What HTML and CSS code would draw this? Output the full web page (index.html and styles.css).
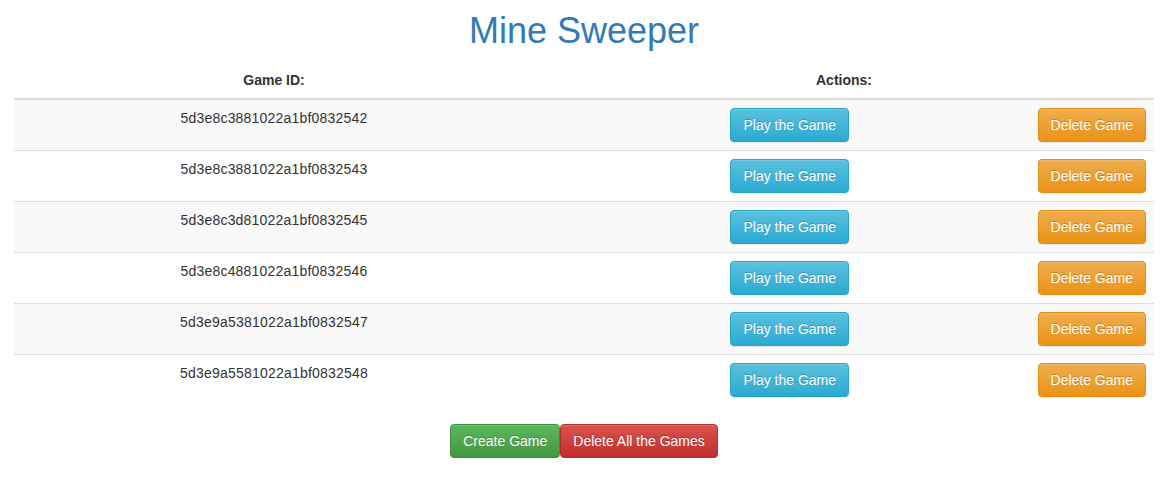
FILE: index.html
```html
<!DOCTYPE html>
<html lang="en">
<head>
<meta charset="utf-8">
<title>Mine Sweeper</title>
<link rel="stylesheet" href="styles.css">
</head>
<body>
<div class="container">
  <h1 class="title">Mine Sweeper</h1>
  <table class="games">
    <thead>
      <tr>
        <th class="col-id">Game ID:</th>
        <th class="col-actions">Actions:</th>
      </tr>
    </thead>
    <tbody>
      <tr>
        <td class="game-id">5d3e8c3881022a1bf0832542</td>
        <td><div class="actions"><div class="play-cell"><button class="btn btn-info">Play the Game</button></div><button class="btn btn-warning">Delete Game</button></div></td>
      </tr>
      <tr>
        <td class="game-id">5d3e8c3881022a1bf0832543</td>
        <td><div class="actions"><div class="play-cell"><button class="btn btn-info">Play the Game</button></div><button class="btn btn-warning">Delete Game</button></div></td>
      </tr>
      <tr>
        <td class="game-id">5d3e8c3d81022a1bf0832545</td>
        <td><div class="actions"><div class="play-cell"><button class="btn btn-info">Play the Game</button></div><button class="btn btn-warning">Delete Game</button></div></td>
      </tr>
      <tr>
        <td class="game-id">5d3e8c4881022a1bf0832546</td>
        <td><div class="actions"><div class="play-cell"><button class="btn btn-info">Play the Game</button></div><button class="btn btn-warning">Delete Game</button></div></td>
      </tr>
      <tr>
        <td class="game-id">5d3e9a5381022a1bf0832547</td>
        <td><div class="actions"><div class="play-cell"><button class="btn btn-info">Play the Game</button></div><button class="btn btn-warning">Delete Game</button></div></td>
      </tr>
      <tr>
        <td class="game-id">5d3e9a5581022a1bf0832548</td>
        <td><div class="actions"><div class="play-cell"><button class="btn btn-info">Play the Game</button></div><button class="btn btn-warning">Delete Game</button></div></td>
      </tr>
    </tbody>
  </table>
  <div class="footer-actions"><button class="btn btn-success">Create Game</button><button class="btn btn-danger">Delete All the Games</button></div>
</div>
</body>
</html>
```
FILE: styles.css
```css
* { box-sizing: border-box; }
html, body { margin: 0; padding: 0; }
body {
  font-family: "Liberation Sans", Arial, Helvetica, sans-serif;
  font-size: 14px;
  line-height: 20px;
  color: #333;
  background: #fff;
}
.container { padding: 0 14px; }
.title {
  margin: 11px 0 11px;
  font-size: 36px;
  line-height: 40px;
  font-weight: 500;
  color: #337ab7;
  text-align: center;
}
.games {
  width: 100%;
  border-collapse: collapse;
  border-spacing: 0;
  table-layout: fixed;
  margin-bottom: 19px;
}
.games th, .games td {
  padding: 8px;
  line-height: 20px;
  text-align: center;
}
.games th {
  vertical-align: bottom;
  font-weight: bold;
  border-bottom: 2px solid #ddd;
}
.games .col-id { width: 520px; }
.games td {
  vertical-align: top;
  border-top: 1px solid #ddd;
}
.games .game-id { letter-spacing: 0.2px; }
.games tbody tr:nth-child(odd) td { background: #f9f9f9; }
.actions { display: flex; align-items: flex-start; }
.play-cell { flex: 1; display: flex; justify-content: center; }
.btn {
  display: inline-block;
  padding: 6px 12px;
  font-family: inherit;
  font-size: 14px;
  line-height: 20px;
  color: #fff;
  border: 1px solid transparent;
  border-radius: 4px;
  cursor: pointer;
  text-shadow: 0 -1px 0 rgba(0,0,0,.2);
  box-shadow: inset 0 1px 0 rgba(255,255,255,.15), 0 1px 1px rgba(0,0,0,.075);
  margin: 0;
}
.btn-info { background-image: linear-gradient(to bottom, #5bc0de 0, #2aabd2 100%); border-color: #28a4c9; }
.btn-warning { background-image: linear-gradient(to bottom, #f0ad4e 0, #eb9316 100%); border-color: #e38d13; }
.btn-success { background-image: linear-gradient(to bottom, #5cb85c 0, #419641 100%); border-color: #3e8f3e; }
.btn-danger { background-image: linear-gradient(to bottom, #d9534f 0, #c12e2a 100%); border-color: #b92c28; }
.footer-actions { display: flex; justify-content: center; }
```
